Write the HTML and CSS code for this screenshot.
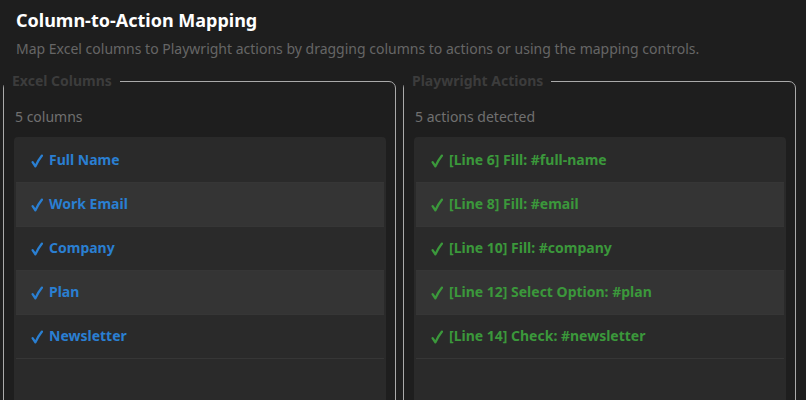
FILE: index.html
```html
<!DOCTYPE html>
<html lang="en">
<head>
  <meta charset="UTF-8">
  <meta name="viewport" content="width=device-width, initial-scale=1.0">
  <title>Column-to-Action Mapping</title>
  <link rel="stylesheet" href="styles.css">
</head>
<body>
  <header class="page-head">
    <h1>Column-to-Action Mapping</h1>
    <p>Map Excel columns to Playwright actions by dragging columns to actions or using the mapping controls.</p>
  </header>

  <div class="panels">
    <fieldset class="panel">
      <legend>Excel Columns</legend>
      <div class="count">5 columns</div>
      <ul class="item-list columns">
        <li><svg class="tick" viewBox="0 0 12 14"><path d="M1.6 8.2 L4.4 12.4 Q7 6.5 11 1.6"/></svg>Full Name</li>
        <li><svg class="tick" viewBox="0 0 12 14"><path d="M1.6 8.2 L4.4 12.4 Q7 6.5 11 1.6"/></svg>Work Email</li>
        <li><svg class="tick" viewBox="0 0 12 14"><path d="M1.6 8.2 L4.4 12.4 Q7 6.5 11 1.6"/></svg>Company</li>
        <li><svg class="tick" viewBox="0 0 12 14"><path d="M1.6 8.2 L4.4 12.4 Q7 6.5 11 1.6"/></svg>Plan</li>
        <li><svg class="tick" viewBox="0 0 12 14"><path d="M1.6 8.2 L4.4 12.4 Q7 6.5 11 1.6"/></svg>Newsletter</li>
      </ul>
    </fieldset>

    <fieldset class="panel">
      <legend>Playwright Actions</legend>
      <div class="count">5 actions detected</div>
      <ul class="item-list actions">
        <li><svg class="tick" viewBox="0 0 12 14"><path d="M1.6 8.2 L4.4 12.4 Q7 6.5 11 1.6"/></svg>[Line 6] Fill: #full-name</li>
        <li><svg class="tick" viewBox="0 0 12 14"><path d="M1.6 8.2 L4.4 12.4 Q7 6.5 11 1.6"/></svg>[Line 8] Fill: #email</li>
        <li><svg class="tick" viewBox="0 0 12 14"><path d="M1.6 8.2 L4.4 12.4 Q7 6.5 11 1.6"/></svg>[Line 10] Fill: #company</li>
        <li><svg class="tick" viewBox="0 0 12 14"><path d="M1.6 8.2 L4.4 12.4 Q7 6.5 11 1.6"/></svg>[Line 12] Select Option: #plan</li>
        <li><svg class="tick" viewBox="0 0 12 14"><path d="M1.6 8.2 L4.4 12.4 Q7 6.5 11 1.6"/></svg>[Line 14] Check: #newsletter</li>
      </ul>
    </fieldset>
  </div>
</body>
</html>
```

FILE: styles.css
```css
body {
  font-family: "Noto Sans", "Open Sans", sans-serif;
  margin: 0;
  padding: 0;
  background: #1e1e1e;
  color: #ccc;
  overflow: hidden;
}

.page-head {
  padding: 8px 16px 0;
}
.page-head h1 {
  font-size: 18px;
  font-weight: bold;
  color: #fff;
  margin: 0;
  line-height: 24px;
}
.page-head p {
  font-size: 14px;
  color: #666;
  margin: 7px 0 0;
  line-height: 20px;
}

.panels {
  display: grid;
  grid-template-columns: 1fr 1fr;
  gap: 7px;
  padding: 0 10px 0 3px;
  margin-top: 12px;
}

.panel {
  margin: 0;
  padding: 0 9px 0 10px;
  border: 1px solid #aaa;
  border-radius: 7px;
  min-width: 0;
  min-height: 400px;
}
.panel legend {
  font-size: 14px;
  font-weight: bold;
  color: #3c3c3c;
  padding: 0 8px;
  margin-left: -10px;
  line-height: 20px;
}

.count {
  font-size: 14px;
  color: #707070;
  margin: 16px 0 0 1px;
  line-height: 20px;
}

.item-list {
  list-style: none;
  margin: 10px 0 0;
  padding: 2px;
  background: #2a2a2a;
  border-radius: 4px;
  min-height: 320px;
}
.item-list li {
  display: flex;
  align-items: center;
  font-size: 14px;
  font-weight: bold;
  line-height: 20px;
  padding: 11px 14px 12px;
  border-bottom: 1px solid #363636;
}
.item-list li:nth-child(even) {
  background: #343434;
}
.tick {
  width: 12px;
  height: 14px;
  margin: 1px 6px 0 1px;
  fill: none;
  stroke: currentColor;
  stroke-width: 2.3;
  stroke-linecap: round;
  stroke-linejoin: round;
}
.columns li {
  color: #2a7fd2;
}
.actions li {
  color: #3b983b;
}
```
